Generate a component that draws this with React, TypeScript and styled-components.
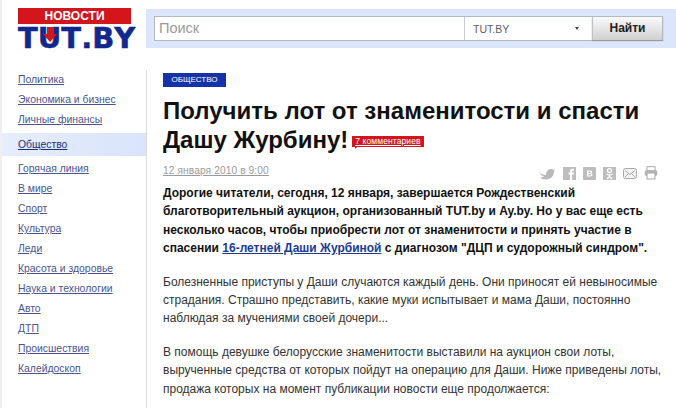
import styled, { createGlobalStyle } from 'styled-components';

const GlobalStyle = createGlobalStyle`
  html, body { margin: 0; padding: 0; background: #fff; overflow: hidden; }
  body { font-family: "Liberation Sans", Arial, sans-serif; width: 676px; height: 408px; }
`;

const NAV_TOP = ['Политика', 'Экономика и бизнес', 'Личные финансы'];
const NAV_BOTTOM = [
  'Горячая линия', 'В мире', 'Спорт', 'Культура', 'Леди', 'Красота и здоровье',
  'Наука и технологии', 'Авто', 'ДТП', 'Происшествия', 'Калейдоскоп',
];
const PARAGRAPHS = [
  [
    'Болезненные приступы у Даши случаются каждый день. Они приносят ей невыносимые',
    'страдания. Страшно представить, какие муки испытывает и мама Даши, постоянно',
    'наблюдая за мучениями своей дочери...',
  ],
  [
    'В помощь девушке белорусские знаменитости выставили на аукцион свои лоты,',
    'вырученные средства от которых пойдут на операцию для Даши. Ниже приведены лоты,',
    'продажа которых на момент публикации новости еще продолжается:',
  ],
];

const Page = styled.div`
  width: 676px;
  height: 408px;
  overflow: hidden;
  border-left: 2px solid #efefef;
  box-sizing: border-box;
`;

const Header = styled.header`
  display: flex;
  align-items: flex-start;
  padding: 8px 0 0 16px;
  gap: 15px;
  height: 70px;
  box-sizing: border-box;
`;

const Logo = styled.div`
  width: 113px;
  flex-shrink: 0;
`;

const LogoTop = styled.div`
  height: 16px;
  background: #d2161c;
  color: #fff;
  font-size: 12px;
  font-weight: bold;
  line-height: 16px;
  text-align: center;
`;

const LogoWord = styled.div`
  display: flex;
  justify-content: space-between;
  align-items: center;
  height: 22px;
  margin-top: 3px;
  color: #12288f;
  font-family: "DejaVu Sans", sans-serif;
  font-size: 29px;
  font-weight: bold;
  line-height: 22px;
  white-space: nowrap;
  -webkit-text-stroke: 0.5px #12288f;
`;

const ArrowU = styled.span`
  position: relative;
  &::before {
    content: '';
    position: absolute;
    left: 50%;
    top: 0;
    margin-left: -3px;
    width: 6px;
    height: 7px;
    background: #d2161c;
  }
  &::after {
    content: '';
    position: absolute;
    left: 50%;
    top: 7px;
    margin-left: -7px;
    border-left: 7px solid transparent;
    border-right: 7px solid transparent;
    border-top: 8px solid #d2161c;
  }
`;

const SearchBar = styled.div`
  flex: 1;
  height: 39px;
  margin-top: 1px;
  background: #dbe6fb;
  display: flex;
  align-items: center;
  padding: 0 2px 0 8px;
`;

const SearchBox = styled.div`
  display: flex;
  height: 25px;
  width: 509px;
  box-sizing: border-box;
  border: 1px solid #b4b8bf;
  border-right: none;
  background: #fff;
`;

const SearchInput = styled.div`
  flex: 1;
  padding-left: 4px;
  color: #9a9a9a;
  font-size: 14.5px;
  line-height: 22px;
`;

const Scope = styled.div`
  width: 128px;
  border-left: 1px solid #c8ccd2;
  display: flex;
  align-items: center;
  justify-content: space-between;
  padding: 0 13px 0 8px;
  box-sizing: border-box;
  color: #5c6068;
  font-size: 10.5px;
`;

const Caret = styled.span`
  width: 0;
  height: 0;
  border-left: 2.5px solid transparent;
  border-right: 2.5px solid transparent;
  border-top: 3px solid #444;
`;

const FindButton = styled.div`
  width: 69px;
  text-align: center;
  background: linear-gradient(#fafafa, #d0d0d0);
  border-left: 1px solid #c0c0c0;
  border-right: 1px solid #b4b8bf;
  box-shadow: 0 1px 1px #9a9a9a;
  color: #222;
  font-size: 12px;
  font-weight: bold;
  line-height: 22px;
`;

const Body = styled.div`
  display: flex;
`;

const Sidebar = styled.nav`
  width: 145px;
  flex-shrink: 0;
  box-sizing: border-box;
  border-right: 1px solid #dcdcdc;
  height: 338px;
`;

const NavItem = styled.a<{ $active?: boolean }>`
  display: block;
  height: ${(p) => (p.$active ? '23px' : '20px')};
  padding-left: 16px;
  color: ${(p) => (p.$active ? '#1b2f7a' : '#4a5590')};
  background: ${(p) => (p.$active ? 'linear-gradient(90deg, #e6edfc, #d9e4fa)' : 'none')};
  font-size: 10.4px;
  line-height: ${(p) => (p.$active ? '23px' : '20px')};
  text-decoration: underline;
  margin: ${(p) => (p.$active ? '3px 0 3px' : '0')};
`;

const Content = styled.main`
  flex: 1;
  padding: 3px 0 0 16px;
  min-width: 0;
`;

const Badge = styled.div`
  width: 63px;
  height: 14px;
  background: #1533a9;
  color: #fff;
  font-size: 8px;
  line-height: 14px;
  text-align: center;
`;

const Title = styled.h1`
  margin: 9px 0 0;
  font-size: 24px;
  line-height: 29px;
  font-weight: bold;
  color: #111;
  white-space: nowrap;
`;

const Comments = styled.a`
  display: inline-block;
  position: relative;
  top: -4px;
  margin-left: 4px;
  padding: 0 3px;
  height: 11px;
  background: #d2161c;
  color: #fff;
  font-size: 8.5px;
  font-weight: normal;
  line-height: 11px;
  letter-spacing: 0.1px;
  text-decoration: underline;
  &::after {
    content: '';
    position: absolute;
    left: 3px;
    top: 11px;
    border-top: 2px solid #d2161c;
    border-right: 2px solid transparent;
  }
`;

const MetaRow = styled.div`
  display: flex;
  align-items: center;
  justify-content: space-between;
  height: 18px;
  margin-top: 7px;
  padding-right: 18px;
`;

const DateText = styled.span`
  color: #9a9a9a;
  font-size: 10.2px;
  letter-spacing: 0.1px;
  text-decoration: underline;
`;

const Share = styled.div`
  display: flex;
  align-items: center;
  gap: 7px;
  margin-top: 6px;
`;

const Lead = styled.div`
  margin: 5px 0 0;
  width: 500px;
  font-size: 12px;
  line-height: 18.3px;
  font-weight: bold;
  color: #111;
`;

const Line = styled.div`
  white-space: nowrap;
`;

const LeadLink = styled.a`
  color: #1b3a94;
  text-decoration: underline;
`;

const Para = styled.div`
  margin: 15.500px 0 0;
  width: 500px;
  font-size: 12px;
  line-height: 18.3px;
  color: #333;
`;

function ShareIcons() {
  return (
    <Share>
      <svg width="18" height="14" viewBox="0 0 18 14">
        <path d="M1 6c2 2 4 3 7 3 0-3 2-6 5-6 1 0 2 .5 2.500 1L17 3.500l-1 2c0 4-3 8-8 8-3 0-5-1-6-2 2 0 3-.5 4-1.500-2 0-3-1-4-2l1 0C2 7 1.200 6.800 1 6z" fill="#b9b9b9" />
      </svg>
      <svg width="13" height="13" viewBox="0 0 13 13">
        <rect width="13" height="13" fill="#bdbdbd" />
        <path d="M7 13V7.500H5.500V5.500H7V4c0-1.500 1-2.300 2.300-2.300H11v2H9.800c-.5 0-.7.2-.7.7v1.100H11l-.3 2H9.100V13z" fill="#fff" />
      </svg>
      <svg width="13" height="13" viewBox="0 0 13 13">
        <rect width="13" height="13" rx="1" fill="#bdbdbd" />
        <path d="M4 3.500h3.200c1.200 0 1.900.6 1.900 1.500 0 .6-.3 1-.8 1.300.7.200 1.200.8 1.200 1.500 0 1.100-.8 1.700-2.100 1.700H4zm1.400 1.100v1.300h1.500c.5 0 .8-.2.800-.7 0-.4-.3-.6-.8-.6zm0 2.300v1.500h1.700c.6 0 .9-.3.900-.8s-.3-.7-.9-.7z" fill="#fff" />
      </svg>
      <svg width="13" height="13" viewBox="0 0 13 13">
        <rect width="13" height="13" fill="#bdbdbd" />
        <circle cx="6.500" cy="3.600" r="2" fill="none" stroke="#fff" strokeWidth="1.300" />
        <path d="M3.500 7c2 1.300 4 1.300 6 0M6.500 8.200V9.500M4 12l2.500-2.500L9 12" fill="none" stroke="#fff" strokeWidth="1.300" />
      </svg>
      <svg width="14" height="11" viewBox="0 0 14 11">
        <rect x=".5" y=".5" width="13" height="10" rx="2" fill="#f4f4f4" stroke="#a8a8a8" />
        <path d="M2 2.500l5 4 5-4M2 9l3.500-3.500M12 9L8.500 5.500" fill="none" stroke="#a8a8a8" />
      </svg>
      <svg width="14" height="14" viewBox="0 0 14 14">
        <rect x="3" y=".7" width="8" height="4" fill="none" stroke="#a8a8a8" />
        <rect x=".7" y="4" width="12.600" height="6" rx="2" fill="#b4b4b4" />
        <rect x="3" y="7" width="8" height="6" fill="#fff" stroke="#a8a8a8" />
      </svg>
    </Share>
  );
}

export default function App() {
  return (
    <Page>
      <GlobalStyle />
      <Header>
        <Logo>
          <LogoTop>НОВОСТИ</LogoTop>
          <LogoWord>
            <span>T</span>
            <ArrowU>U</ArrowU>
            <span>T</span>
            <span>.</span>
            <span>B</span>
            <span>Y</span>
          </LogoWord>
        </Logo>
        <SearchBar>
          <SearchBox>
            <SearchInput>Поиск</SearchInput>
            <Scope>
              TUT.BY
              <Caret />
            </Scope>
            <FindButton>Найти</FindButton>
          </SearchBox>
        </SearchBar>
      </Header>
      <Body>
        <Sidebar>
          {NAV_TOP.map((n) => (
            <NavItem key={n}>{n}</NavItem>
          ))}
          <NavItem $active>Общество</NavItem>
          {NAV_BOTTOM.map((n) => (
            <NavItem key={n}>{n}</NavItem>
          ))}
        </Sidebar>
        <Content>
          <Badge>ОБЩЕСТВО</Badge>
          <Title>
            Получить лот от знаменитости и спасти
            <br />
            Дашу Журбину!
            <Comments>7 комментариев</Comments>
          </Title>
          <MetaRow>
            <DateText>12 января 2010 в 9:00</DateText>
            <ShareIcons />
          </MetaRow>
          <Lead>
            <Line>Дорогие читатели, сегодня, 12 января, завершается Рождественский</Line>
            <Line>благотворительный аукцион, организованный TUT.by и Ay.by. Но у вас еще есть</Line>
            <Line>несколько часов, чтобы приобрести лот от знаменитости и принять участие в</Line>
            <Line>
              спасении <LeadLink>16-летней Даши Журбиной</LeadLink> с диагнозом "ДЦП и судорожный синдром".
            </Line>
          </Lead>
          {PARAGRAPHS.map((lines) => (
            <Para key={lines[0]}>
              {lines.map((l) => (
                <Line key={l}>{l}</Line>
              ))}
            </Para>
          ))}
        </Content>
      </Body>
    </Page>
  );
}
